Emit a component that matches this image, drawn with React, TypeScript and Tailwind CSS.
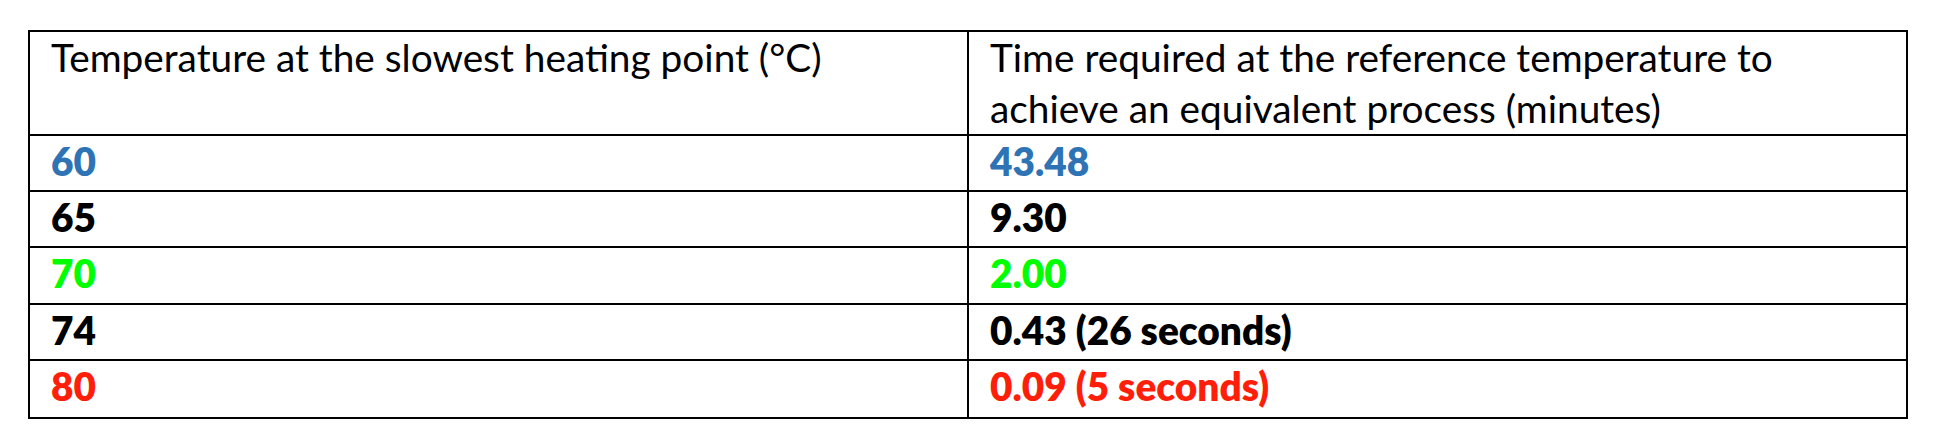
import React from "react";

const rows: { t: string; v: string; c: string }[] = [
  { t: "60", v: "43.48", c: "text-[#2e74b5]" },
  { t: "65", v: "9.30", c: "text-black" },
  { t: "70", v: "2.00", c: "text-[#00ff00]" },
  { t: "74", v: "0.43 (26 seconds)", c: "text-black" },
  { t: "80", v: "0.09 (5 seconds)", c: "text-[#ff1e0a]" },
];

const heights = ["h-[56px]", "h-[56px]", "h-[57px]", "h-[56px]", "h-[56px]"];

export default function App() {
  return (
    <div
      className="w-[1937px] h-[447px] bg-white pt-[30px] pl-[28px]"
      style={{ fontFamily: "Lato, 'Open Sans', sans-serif" }}
    >
      <div className="w-[1880px] border-2 border-black text-[38.8px] leading-[51px] text-black">
        <div className="flex h-[104px] border-b-2 border-black">
          <div className="w-[939px] border-r-2 border-black pl-[21px]">
            Temperature at the slowest heating point (°C)
          </div>
          <div className="flex-1 pl-[21px]">
            Time required at the reference temperature to
            <br />
            achieve an equivalent process (minutes)
          </div>
        </div>
        {rows.map((r, i) => (
          <div
            key={r.t}
            className={`flex ${heights[i]} ${i < rows.length - 1 ? "border-b-2 border-black" : ""} font-extrabold ${r.c}`}
          >
            <div className="w-[939px] border-r-2 border-black pl-[21px]">{r.t}</div>
            <div className="flex-1 pl-[21px]">{r.v}</div>
          </div>
        ))}
      </div>
    </div>
  );
}
